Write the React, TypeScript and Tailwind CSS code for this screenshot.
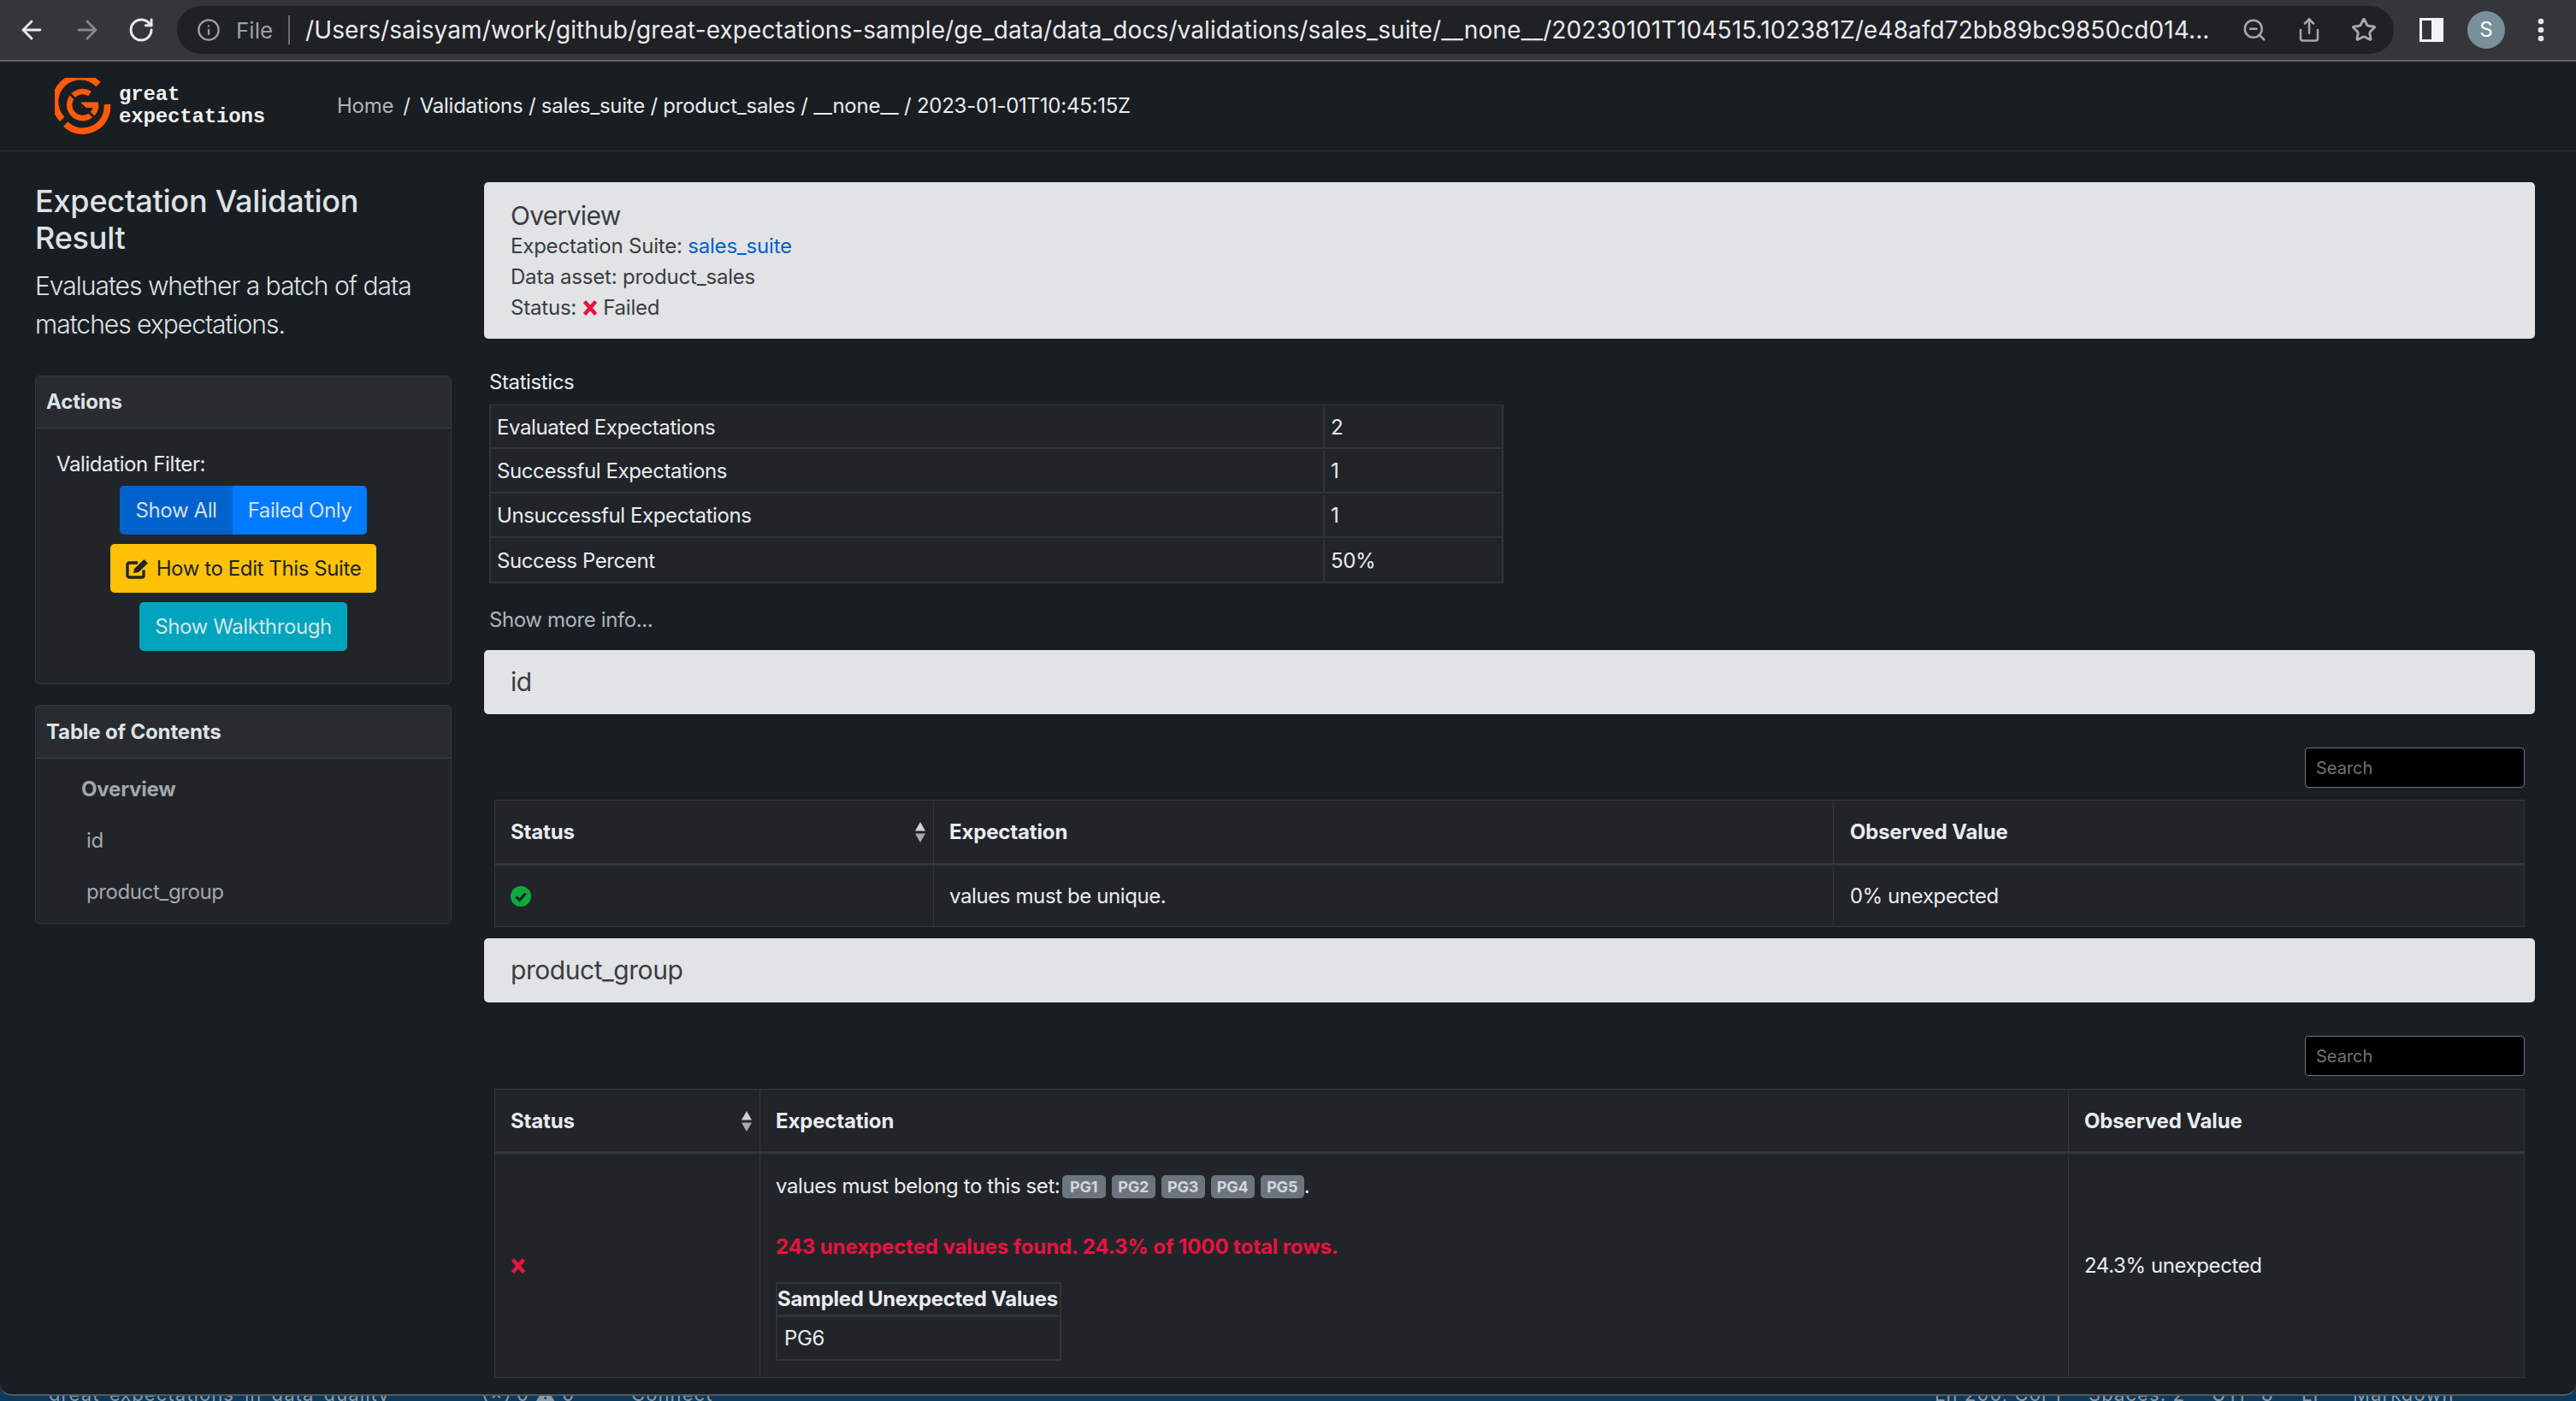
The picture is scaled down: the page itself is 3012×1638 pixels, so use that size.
import { ArrowLeft, ArrowRight, RotateCw, Info, ZoomOut, Share, Star, MoreVertical } from "lucide-react"

const font = "font-['Inter','Noto_Sans',sans-serif]"

const Logo = () => (
    <svg width="66" height="66" viewBox="0 0 66 66" fill="none" stroke="#ff5a0a">
        <path d="M51 7.7 A29 29 0 0 0 8.7 48.3" strokeWidth="7.5" />
        <path d="M12.7 54 A28.7 28.7 0 0 0 61.4 31" strokeWidth="7.5" />
        <path d="M41 18.5 A15.5 15.5 0 1 0 48.2 31.7" strokeWidth="6.5" />
        <path d="M31 31.7 H51" strokeWidth="6.5" />
        <path d="M17 18 L47 47" stroke="#191e22" strokeWidth="3" />
    </svg>
)

const StatRow = ({ label, value, h }: { label: string; value: string; h: string }) => (
    <div className={`flex ${h} pt-[2px] border-b-[2px] last:border-b-0 border-[#2f353b]`}>
        <div className="w-[975px] pl-[7px] flex items-center border-r-2 border-[#2f353b]">{label}</div>
        <div className="flex-1 pl-[7px] flex items-center">{value}</div>
    </div>
)

const SectionBar = ({ title }: { title: string }) => (
    <div className="h-[75px] bg-[#e2e3e5] rounded-[5px] pl-[31px] flex items-center text-[30px] tracking-[-0.45px] text-[#383d41]">{title}</div>
)

const SearchBox = () => (
    <div className="w-[257px] h-[47px] ml-auto mr-3 bg-black border border-[#6c757d] rounded-[4px] pl-3 flex items-center text-[20px] tracking-normal text-[#6c757d]">Search</div>
)

const SortIcon = () => (
    <svg width="14" height="24" viewBox="0 0 14 24" className="ml-auto mr-[8px]">
        <path d="M7 0 L13 10.5 H1 Z" fill="#cfd1d3" />
        <path d="M7 24 L13 13.5 H1 Z" fill="#a6a9ac" />
    </svg>
)

const CheckIcon = () => (
    <svg width="24" height="24" viewBox="0 0 24 24">
        <circle cx="12" cy="12" r="12" fill="#0fa83c" />
        <path d="M6.5 12.5 L10.5 16.5 L17.5 8.5" fill="none" stroke="#16202a" strokeWidth="3" />
    </svg>
)

const CrossIcon = () => (
    <svg width="18" height="18" viewBox="0 0 18 18">
        <path d="M2.5 1.5 L15.5 16.5 M15.5 1.5 L2.5 16.5" stroke="#e8133f" strokeWidth="4.5" />
    </svg>
)

const Badge = ({ text }: { text: string }) => (
    <span className="inline-flex items-center justify-center w-[51px] h-[27px] mr-[7px] rounded-[5px] bg-[#6c757d] text-[#d3d6d9] text-[18px] tracking-[-0.2px] font-bold">{text}</span>
)

const App = () => {
    return (
        <div className={`${font} w-[3012px] h-[1638px] overflow-hidden flex flex-col bg-[#0b3a5e] text-[24px] tracking-[-0.4px] text-[#e9ecef]`}>
            <div className="h-[1632px] shrink-0 flex flex-col bg-[#191e22] border-b-2 border-[#55585c] rounded-b-[14px] overflow-hidden">
                {/* browser chrome */}
                <div className="h-[72px] shrink-0 bg-[#35363a] border-b-2 border-[#5f6368] flex items-center tracking-normal">
                    <div className="w-[207px] pl-[20px] flex items-center">
                        <ArrowLeft size={34} color="#e8eaed" strokeWidth={2} />
                        <ArrowRight size={34} color="#85878a" strokeWidth={2} className="ml-[31px]" />
                        <RotateCw size={32} color="#e8eaed" strokeWidth={2.2} className="ml-[30px]" />
                    </div>
                    <div className="w-[2592px] h-[56px] bg-[#202124] rounded-[28px] flex items-center pl-[23px] pr-[20px]">
                        <Info size={28} color="#9aa0a6" />
                        <span className="ml-[18px] text-[26px] text-[#9aa0a6]">File</span>
                        <span className="ml-[18px] w-[2px] h-[34px] bg-[#6b6e72]" />
                        <span className="ml-[18px] text-[28px] tracking-[0.09px] text-[#e8eaed] whitespace-nowrap">/Users/saisyam/work/github/great-expectations-sample/ge_data/data_docs/validations/sales_suite/__none__/20230101T104515.102381Z/e48afd72bb89bc9850cd014...</span>
                        <ZoomOut size={30} color="#a6a8ab" className="ml-auto" />
                        <Share size={30} color="#a6a8ab" className="ml-[34px]" />
                        <Star size={30} color="#a6a8ab" strokeWidth={2.4} className="ml-[34px]" />
                    </div>
                    <div className="w-[28px] h-[28px] ml-[30px] bg-[#f1f3f4] pl-[3px] py-[3px]">
                        <div className="w-[11px] h-[22px] bg-[#35363a]" />
                    </div>
                    <div className="w-[44px] h-[44px] ml-[28px] rounded-full bg-[#78909c] flex items-center justify-center text-[24px] text-white">S</div>
                    <MoreVertical size={34} color="#e8eaed" strokeWidth={2.6} className="ml-[25px]" />
                </div>

                {/* navbar */}
                <div className="h-[105px] shrink-0 border-b border-[#32383e] flex items-center pl-[64px]">
                    <Logo />
                    <div className="ml-[9px] font-['Liberation_Mono',monospace] font-bold text-[24px] leading-[26px] text-[#f0f0f0] tracking-[-0.15px]">
                        <div>great</div>
                        <div>expectations</div>
                    </div>
                    <div className="ml-[84px] text-[24px] tracking-[-0.25px] flex items-center whitespace-nowrap">
                        <span className="text-[#adb5bd]">Home</span>
                        <span className="mx-[11px] text-[#dee2e6]">/</span>
                        <span>Validations / sales_suite / product_sales / __none__ / 2023-01-01T10:45:15Z</span>
                    </div>
                </div>

                <div className="flex-1 flex min-h-0">
                    {/* sidebar */}
                    <div className="w-[487px] ml-[41px] shrink-0 pt-[37px]">
                        <h1 className="text-[36px] leading-[43px] tracking-[-0.2px] font-medium text-[#dee2e6]">Expectation Validation Result</h1>
                        <p className="mt-[12px] text-[30px] leading-[45px] tracking-[-1px] font-light text-[#dee2e6]">Evaluates whether a batch of data matches expectations.</p>
                        <div className="mt-[37px] h-[361px] bg-[#212529] border border-[#32383e] rounded-[5px]">
                            <div className="h-[61px] bg-[#282c30] border-b border-[#3a4046] pl-[12px] flex items-center font-bold tracking-[-0.15px] text-[#dee2e6]">Actions</div>
                            <div className="pl-[24px] pt-[24px] leading-[36px]">Validation Filter:</div>
                            <div className="flex flex-col items-center gap-[11px] mt-[7px]">
                                <div className="flex h-[57px] rounded-[5px] overflow-hidden text-[#d6dfe8]">
                                    <div className="w-[132px] bg-[#0062cc] flex items-center justify-center">Show All</div>
                                    <div className="w-[157px] bg-[#007bff] flex items-center justify-center">Failed Only</div>
                                </div>
                                <div className="w-[311px] h-[57px] rounded-[5px] bg-[#ffc107] text-[#212529] flex items-center justify-center gap-[8px]">
                                    <svg width="28" height="24" viewBox="0 0 28 24">
                                        <path d="M21 13.5 V20 a2 2 0 0 1 -2 2 H4 a2 2 0 0 1 -2 -2 V7 a2 2 0 0 1 2 -2 H14" fill="none" stroke="#212529" strokeWidth="3.4" />
                                        <path d="M9 17 L10 12 L21.5 1 L26 5.5 L15 16 Z" fill="#212529" />
                                    </svg>
                                    How to Edit This Suite
                                </div>
                                <div className="w-[243px] h-[57px] rounded-[5px] bg-[#00a5bd] text-[#d6e4e8] flex items-center justify-center">Show Walkthrough</div>
                            </div>
                        </div>
                        <div className="mt-[24px] h-[256px] bg-[#212529] border border-[#32383e] rounded-[5px]">
                            <div className="h-[62px] bg-[#282c30] border-b border-[#3a4046] pl-[12px] flex items-center font-bold tracking-[-0.15px] text-[#dee2e6]">Table of Contents</div>
                            <div className="pl-[53px] pt-[6px] text-[#a4a7aa]">
                                <div className="h-[60px] flex items-center font-bold tracking-[-0.2px]">Overview</div>
                                <div className="h-[60px] flex items-center pl-[6px]">id</div>
                                <div className="h-[60px] flex items-center pl-[6px]">product_group</div>
                            </div>
                        </div>
                    </div>

                    {/* main column */}
                    <div className="w-[2398px] ml-[38px] shrink-0 pt-[36px]">
                        <div className="h-[183px] bg-[#e2e3e5] rounded-[5px] pl-[31px] pt-[21px] text-[#383d41] leading-[36px] tracking-[-0.2px]">
                            <div className="text-[30px] tracking-[-0.7px]">Overview</div>
                            <div>Expectation Suite: <span className="text-[#0062cc]">sales_suite</span></div>
                            <div>Data asset: product_sales</div>
                            <div className="flex items-center">Status:&nbsp;<CrossIcon />&nbsp;Failed</div>
                        </div>

                        <div className="ml-[6px] mt-[33px] leading-[36px]">Statistics</div>
                        <div className="ml-[6px] mt-[8px] w-[1186px] bg-[#212529] border-x-2 border-t border-b-2 border-[#2f353b]">
                            <StatRow label="Evaluated Expectations" value="2" h="h-[51px]" />
                            <StatRow label="Successful Expectations" value="1" h="h-[52px]" />
                            <StatRow label="Unsuccessful Expectations" value="1" h="h-[52px]" />
                            <StatRow label="Success Percent" value="50%" h="h-[51px]" />
                        </div>
                        <div className="ml-[6px] mt-[25px] leading-[36px] text-[#adb5bd]">Show more info...</div>

                        <div className="mt-[17px]"><SectionBar title="id" /></div>
                        <div className="mt-[39px]"><SearchBox /></div>
                        <div className="mx-[12px] mt-[14px] bg-[#212529] border border-[#32383e]">
                            <div className="flex h-[76px] pt-[1px] border-b-[3px] border-[#32383e] font-bold tracking-[-0.15px]">
                                <div className="w-[513px] pl-[18px] flex items-center border-r border-[#32383e]">Status<SortIcon /></div>
                                <div className="w-[1052px] pl-[18px] flex items-center border-r border-[#32383e]">Expectation</div>
                                <div className="flex-1 pl-[19px] flex items-center">Observed Value</div>
                            </div>
                            <div className="flex h-[71px]">
                                <div className="w-[513px] pl-[18px] flex items-center border-r border-[#32383e]"><CheckIcon /></div>
                                <div className="w-[1052px] pl-[18px] flex items-center border-r border-[#32383e]">values must be unique.</div>
                                <div className="flex-1 pl-[19px] flex items-center">0% unexpected</div>
                            </div>
                        </div>

                        <div className="mt-[13px]"><SectionBar title="product_group" /></div>
                        <div className="mt-[39px]"><SearchBox /></div>
                        <div className="mx-[12px] mt-[15px] bg-[#212529] border border-[#32383e]">
                            <div className="flex h-[75px] pt-[1px] border-b-[3px] border-[#32383e] font-bold tracking-[-0.15px]">
                                <div className="w-[310px] pl-[18px] flex items-center border-r border-[#32383e]">Status<SortIcon /></div>
                                <div className="w-[1530px] pl-[18px] flex items-center border-r border-[#32383e]">Expectation</div>
                                <div className="flex-1 pl-[18px] flex items-center">Observed Value</div>
                            </div>
                            <div className="flex h-[261px]">
                                <div className="w-[310px] pl-[18px] flex items-center border-r border-[#32383e]"><CrossIcon /></div>
                                <div className="w-[1530px] pl-[18px] pt-[20px] border-r border-[#32383e]">
                                    <div className="flex items-center h-[36px] whitespace-nowrap">values must belong to this set:&nbsp;<span className="-ml-[4px]" /><Badge text="PG1" /><Badge text="PG2" /><Badge text="PG3" /><Badge text="PG4" /><Badge text="PG5" /><span className="-ml-[7px]">.</span></div>
                                    <div className="mt-[35px] leading-[36px] font-bold tracking-[-0.1px] text-[#e8133f]">243 unexpected values found. 24.3% of 1000 total rows.</div>
                                    <div className="mt-[23px] w-[334px] border-2 border-[#2f353b]">
                                        <div className="h-[39px] border-b-[3px] border-[#2f353b] font-bold tracking-[-0.3px] whitespace-nowrap flex items-center">Sampled Unexpected Values</div>
                                        <div className="h-[49px] pl-2 flex items-center">PG6</div>
                                    </div>
                                </div>
                                <div className="flex-1 pl-[18px] flex items-center">24.3% unexpected</div>
                            </div>
                        </div>
                    </div>
                </div>
            </div>

            {/* editor status bar peeking out under the window */}
            <div className="h-[6px] shrink-0 overflow-hidden text-[22px] leading-[14px] tracking-[1.1px] whitespace-nowrap text-[#8a9aa8] flex pl-[57px]">
                <span className="w-[399px] shrink-0 -mt-[9px]">great_expectations_in_data_quality</span>
                <span className="w-[102px] shrink-0 ml-[109px] -mt-[9px]">⊗ 0 ⚠ 0</span>
                <span className="w-[92px] shrink-0 ml-[71px] -mt-[9px]">Connect</span>
                <span className="w-[149px] shrink-0 ml-[1432px] -mt-[9px]">Ln 200, Col 1</span>
                <span className="w-[109px] shrink-0 ml-[31px] -mt-[9px]">Spaces: 2</span>
                <span className="w-[70px] shrink-0 ml-[35px] -mt-[9px]">UTF-8</span>
                <span className="w-[20px] shrink-0 ml-[35px] -mt-[9px]">LF</span>
                <span className="w-[115px] shrink-0 ml-[40px] -mt-[9px]">Markdown</span>
            </div>
        </div>
    )
}

export default App
